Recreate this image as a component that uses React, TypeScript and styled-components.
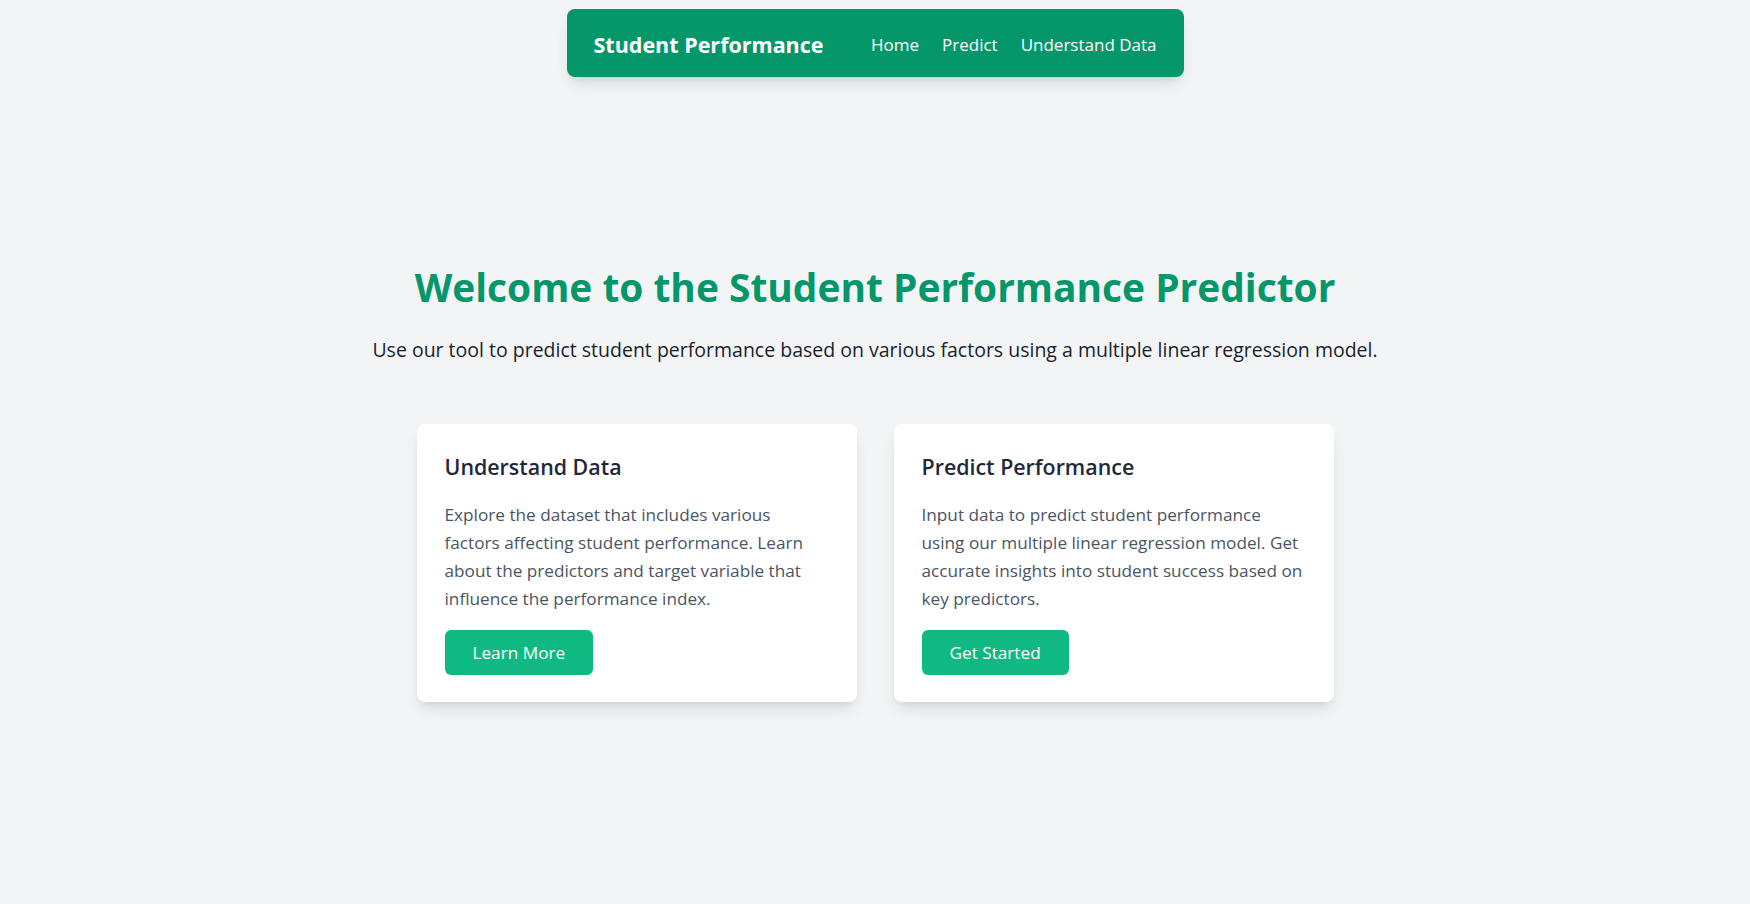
import React from "react";
import styled, { createGlobalStyle } from "styled-components";

const GlobalStyle = createGlobalStyle`
  * { box-sizing: border-box; }
  html, body {
    margin: 0;
    padding: 0;
    background: #f3f4f6;
    font-family: "Open Sans", "Noto Sans", "Liberation Sans", sans-serif;
    -webkit-font-smoothing: antialiased;
  }
`;

const Page = styled.div`
  min-height: 904px;
  background: #f3f4f6;
  display: flex;
  flex-direction: column;
  align-items: center;
`;

const NavWrap = styled.header`
  padding-top: 9px;
  display: flex;
  justify-content: center;
  width: 100%;
`;

const Nav = styled.nav`
  width: 617px;
  height: 68px;
  padding: 4px 27px 0;
  background: #059669;
  border-radius: 8px;
  box-shadow: 0 10px 15px -3px rgba(0, 0, 0, 0.1), 0 4px 6px -4px rgba(0, 0, 0, 0.1);
  display: flex;
  align-items: center;
  justify-content: space-between;
`;

const Brand = styled.a`
  color: #ffffff;
  font-weight: 700;
  font-size: 21.5px;
  line-height: 32px;
  text-decoration: none;
`;

const Links = styled.ul`
  list-style: none;
  margin: 0;
  padding: 0;
  display: flex;
  gap: 23px;
`;

const NavLink = styled.a`
  color: #ffffff;
  font-size: 17px;
  line-height: 28px;
  text-decoration: none;
`;

const Main = styled.main`
  padding-top: 185px;
  display: flex;
  flex-direction: column;
  align-items: center;
  width: 100%;
`;

const Title = styled.h1`
  margin: 0;
  color: #059669;
  font-weight: 700;
  font-size: 38.9px;
  line-height: 50px;
  text-align: center;
`;

const Subtitle = styled.p`
  margin: 24px 0 0;
  color: #1a1f2b;
  font-size: 19.5px;
  line-height: 28px;
  text-align: center;
`;

const Cards = styled.div`
  margin-top: 60px;
  display: grid;
  grid-template-columns: 440px 440px;
  gap: 37px;
`;

const Card = styled.section`
  background: #ffffff;
  border-radius: 8px;
  padding: 27px 28px;
  box-shadow: 0 10px 15px -3px rgba(0, 0, 0, 0.1), 0 4px 6px -4px rgba(0, 0, 0, 0.1);
  display: flex;
  flex-direction: column;
  align-items: flex-start;
`;

const CardTitle = styled.h2`
  margin: 0;
  color: #1f2937;
  font-weight: 600;
  font-size: 21.4px;
  line-height: 32px;
`;

const CardText = styled.p`
  margin: 18px 0 0;
  width: 384px;
  color: #4b5563;
  font-size: 17.2px;
  line-height: 28px;
`;

const Button = styled.a`
  margin-top: 17px;
  height: 45px;
  padding: 0 28px;
  display: inline-flex;
  align-items: center;
  background: #10b981;
  color: #ffffff;
  font-size: 17.2px;
  border-radius: 6px;
  text-decoration: none;
`;

const cards = [
  {
    title: "Understand Data",
    text: "Explore the dataset that includes various factors affecting student performance. Learn about the predictors and target variable that influence the performance index.",
    cta: "Learn More",
  },
  {
    title: "Predict Performance",
    text: "Input data to predict student performance using our multiple linear regression model. Get accurate insights into student success based on key predictors.",
    cta: "Get Started",
  },
];

export default function App() {
  return (
    <>
      <GlobalStyle />
      <Page>
        <NavWrap>
          <Nav>
            <Brand href="#">Student Performance</Brand>
            <Links>
              <li><NavLink href="#">Home</NavLink></li>
              <li><NavLink href="#">Predict</NavLink></li>
              <li><NavLink href="#">Understand Data</NavLink></li>
            </Links>
          </Nav>
        </NavWrap>
        <Main>
          <Title>Welcome to the Student Performance Predictor</Title>
          <Subtitle>
            Use our tool to predict student performance based on various factors using a multiple linear regression model.
          </Subtitle>
          <Cards>
            {cards.map((c) => (
              <Card key={c.title}>
                <CardTitle>{c.title}</CardTitle>
                <CardText>{c.text}</CardText>
                <Button href="#">{c.cta}</Button>
              </Card>
            ))}
          </Cards>
        </Main>
      </Page>
    </>
  );
}
